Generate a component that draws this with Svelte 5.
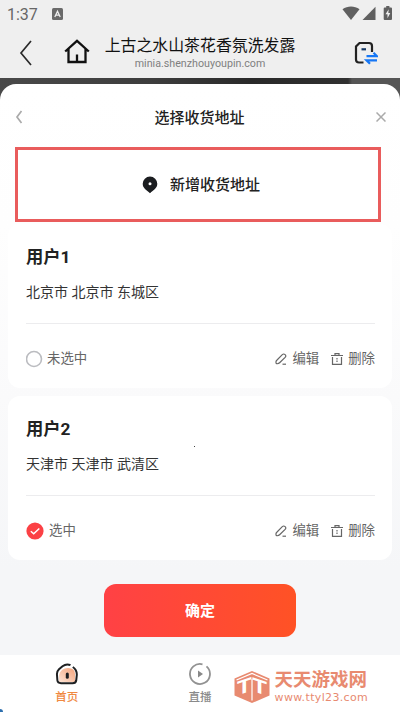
<script>
	let selected = 2

	const addresses = [
		{ id: 1, name: '用户1', area: '北京市 北京市 东城区' },
		{ id: 2, name: '用户2', area: '天津市 天津市 武清区' }
	]
</script>

<div class="phone">
	<div class="status">
		<span class="time">1:37</span>
		<svg class="a-box" width="11" height="12" viewBox="0 0 11 12">
			<rect width="11" height="12" rx="1.5" fill="#6a6a6a" />
			<path d="M2.8 9 5.5 3.2 8.2 9M4 7.2h3" fill="none" stroke="#efefef" stroke-width="1.3" />
		</svg>
		<svg class="signals" width="52" height="15" viewBox="0 0 52 15" fill="#606060">
			<path d="M.5 3.3C5.5-.5 12.500-.5 17.500 3.300L9 14z" />
			<path d="M33.500.8V14H20.500z" />
			<path d="M44.200 1.500V0h3.200v1.500H49q1 0 1 1V13q0 1-1 1h-6.300q-1 0-1-1V2.500q0-1 1-1z" />
			<path d="M46.700 3.300 43.500 8.300h2v4L48.300 7h-2z" fill="#efefef" />
		</svg>
	</div>

	<header>
		<svg class="back" width="14" height="26" viewBox="0 0 14 26">
			<path d="M12 1 2 13l10 12" fill="none" stroke="#2a2a2a" stroke-width="1.700" />
		</svg>
		<svg class="home" width="26" height="25" viewBox="0 0 26 25" fill="none" stroke="#111" stroke-width="2.300">
			<path d="M1.200 12.500 13 1.800l11.800 10.700M4.500 10v13h17V10M13 15.500V23" />
		</svg>
		<div class="page-name">
			<div class="title">上古之水山茶花香氛洗发露</div>
			<div class="url">minia.shenzhouyoupin.com</div>
		</div>
		<svg class="switch" width="24" height="24" viewBox="0 0 24 24" fill="none">
			<path d="M9.500 21.500H5q-3 0-3-3V5.500L5.500 2H15q3 0 3 3v6" stroke="#222" stroke-width="2.200" />
			<path d="M7.500 8.300h4.500" stroke="#173a66" stroke-width="2.200" />
			<path d="M12.500 15.200H23l-3.500-3.400M23 19.300H12.500l3.500 3.400" stroke="#1677f5" stroke-width="2.200" />
		</svg>
	</header>

	<div class="behind">
		<div class="sheet">
			<div class="sheet-head">
				<svg width="8" height="14" viewBox="0 0 8 14" fill="none" stroke="#aaa" stroke-width="1.700">
					<path d="M6.500 1 2 7l4.500 6" />
				</svg>
				<b>选择收货地址</b>
				<svg width="10" height="10" viewBox="0 0 10 10" fill="none" stroke="#aaa" stroke-width="1.500">
					<path d="m.5.5 9 9m0-9-9 9" />
				</svg>
			</div>

			<button class="add">
				<svg width="16" height="18" viewBox="0 0 16 18">
					<path d="M8 .5a7.300 7.300 0 0 0-7.300 7.300c0 4.500 3.800 6 7.300 9.500 3.500-3.500 7.300-5 7.300-9.500A7.300 7.300 0 0 0 8 .5z" fill="#1b1d20" />
					<circle cx="8" cy="7.700" r="1.500" fill="#fff" />
				</svg>
				<span>新增收货地址</span>
			</button>

			{#each addresses as item}
				<section class="card">
					<h2>{item.name}</h2>
					<p>{item.area}</p>
					<div class="actions">
						<button class="choose" on:click={() => (selected = item.id)}>
							{#if selected === item.id}
								<svg width="18" height="18" viewBox="0 0 18 18">
									<circle cx="9" cy="9" r="8.600" fill="#fb4145" />
									<path d="m4.800 9.200 2.900 2.600 5.600-5.300" fill="none" stroke="#fff" stroke-width="1.500" />
								</svg>
								<span class="on">选中</span>
							{:else}
								<svg width="18" height="18" viewBox="0 0 18 18">
									<circle cx="8" cy="9" r="7.500" fill="#fff" stroke="#bbbcc0" stroke-width="1.600" />
								</svg>
								<span>未选中</span>
							{/if}
						</button>
						<button class="edit">
							<svg width="12" height="12" viewBox="0 0 12 12" fill="none" stroke="#666" stroke-width="1.200">
								<path d="M1 9.500Q.7 8.200 1.800 7.200L7.300 1.600q1.400-1.200 2.800 0t0 2.800L4.600 9.800Q3.400 11 1.600 10.700 1 10.500 1 9.500z" />
								<path d="M7.500 11.200h3.500" />
							</svg>
							<span>编辑</span>
						</button>
						<button class="delete">
							<svg width="12" height="12" viewBox="0 0 12 12" fill="none" stroke="#666" stroke-width="1.200">
								<path d="M0 2.500h12M4 2V.700h4V2M1.500 4v7.300h9V4" />
								<path d="M6 5v4" stroke-dasharray="1.500 1" />
							</svg>
							<span>删除</span>
						</button>
					</div>
				</section>
			{/each}

			<button class="confirm">确定</button>
		</div>
	</div>

	<nav>
		<div class="tab active">
			<svg width="24" height="22" viewBox="0 0 24 22" fill="none">
				<defs>
					<linearGradient id="peach" x1="0" y1="1" x2="1" y2="0">
						<stop offset="0" stop-color="#fde4d5" />
						<stop offset="1" stop-color="#f5a37b" />
					</linearGradient>
				</defs>
				<path d="M4 19V12q2-7 9-7 7 0 7 6v8z" fill="url(#peach)" />
				<path d="M15.500 2.200Q11.500.2 7.500 3.200L4 6.200Q1.600 8.500 2 12l.4 5.500Q2.700 20.200 6 20.200h11.500q3.300 0 3.700-2.700l.6-5.500q.3-5-4-8" stroke="#1e2022" stroke-width="2" />
				<path d="M12.300 11v3.200" stroke="#1e2022" stroke-width="3" stroke-linecap="round" />
			</svg>
			<span>首页</span>
		</div>
		<div class="tab">
			<svg width="24" height="22" viewBox="0 0 24 22" fill="none">
				<path d="M14.500 1.300A10 10 0 1 0 18.500 3.400" stroke="#929292" stroke-width="1.800" />
				<path d="m10 7.600 5 3.400-5 3.400z" fill="#888" />
			</svg>
			<span>直播</span>
		</div>
		<div class="brand">
			<svg width="36" height="32" viewBox="0 0 36 32">
				<path d="M18 0 35.500 7.500v17L18 32 .5 24.500v-17z" fill="#e88a70" />
				<path d="M2.500 9 18 2.500 33.500 9M18 8v21.500" fill="none" stroke="#fff" stroke-width="1.200" />
				<text transform="matrix(1.200 -.400 0 1 3 24.500)">T</text>
				<text transform="matrix(1.200 .400 0 1 18.200 20)">T</text>
			</svg>
			<div>
				<div class="brand-name">天天游戏网</div>
				<div class="brand-url">www.ttyl23.com</div>
			</div>
		</div>
	</nav>

	<i class="speck"></i>
	<i class="corner"></i>
</div>

<style>
	:global(body) {
		margin: 0;
		background: #fff;
	}

	.phone {
		position: relative;
		width: 400px;
		height: 712px;
		overflow: hidden;
		display: flex;
		flex-direction: column;
		background: #efefef;
		font-family: Roboto, "Noto Sans CJK SC", sans-serif;
		color: #222;
	}

	svg {
		display: block;
		flex: none;
	}

	button {
		border: 0;
		padding: 0;
		background: none;
		font: inherit;
		color: inherit;
	}

	.status {
		height: 28px;
		box-sizing: border-box;
		padding: 0 6px 0 7px;
		display: flex;
		align-items: center;
	}

	.time {
		width: 45px;
		font-size: 16px;
		color: #666;
	}

	.signals {
		margin: -2px 0 0 auto;
	}

	header {
		height: 50px;
		display: flex;
		align-items: center;
	}

	.back {
		margin-left: 19px;
		margin-top: -1px;
	}

	.home {
		margin-left: 31px;
		margin-top: -3px;
	}

	.page-name {
		width: 192px;
		margin: -1px 0 0 14px;
		text-align: center;
		white-space: nowrap;
	}

	.title {
		font-size: 15.9px;
		line-height: 22px;
		color: #111;
	}

	.url {
		font-size: 10.7px;
		line-height: 14px;
		color: #808080;
	}

	.switch {
		margin-left: 58px;
		margin-top: -1px;
	}

	.behind {
		flex: 1;
		padding-top: 6px;
		background: linear-gradient(90deg, #494949, #3d3d3d 38%, #292929 63%, #303030 87%, #555 88%);
		background-size: 100% 30px;
		background-repeat: no-repeat;
	}

	.sheet {
		height: 571px;
		border-radius: 16px 16px 0 0;
		background: linear-gradient(#fff 0, #fefefe 25%, #fafafb 55%, #f5f6f8 85%);
		overflow: hidden;
	}

	.sheet-head {
		height: 63px;
		padding: 3px 14px 0 15px;
		display: flex;
		align-items: center;
		justify-content: space-between;
		box-sizing: border-box;
	}

	.sheet-head b {
		margin-top: -2px;
		font-size: 15px;
		font-weight: 500;
	}

	.add {
		width: 366px;
		height: 75px;
		margin-left: 15px;
		padding-left: 6px;
		display: flex;
		align-items: center;
		justify-content: center;
		gap: 12px;
		border: 3px solid #e95c5c;
		background: #fff;
		font-size: 15px;
		font-weight: 500;
	}

	.add span {
		margin-top: -3px;
	}

	.card {
		height: 164px;
		margin: 2px 8px 8px;
		padding: 21px 17px 0 18px;
		box-sizing: border-box;
		border-radius: 12px;
		background: #fff;
	}

	.card + .card {
		margin-top: 0;
	}

	h2 {
		margin: 0;
		font-size: 17.3px;
		line-height: 25px;
		font-weight: 700;
	}

	p {
		margin: 12px 0 0;
		font-size: 14px;
		line-height: 20px;
		color: #333;
	}

	.actions {
		margin-top: 21px;
		padding-top: 24px;
		display: flex;
		align-items: center;
		border-top: 1px solid #ececee;
		font-size: 13.4px;
		line-height: 22px;
		color: #666;
	}

	.actions button {
		display: flex;
		align-items: center;
		gap: 5px;
	}

	.actions .choose {
		gap: 3px;
		margin-right: auto;
	}

	.on {
		margin-left: 2px;
	}

	.actions .delete {
		margin-left: 12px;
	}

	.confirm {
		display: block;
		width: 192px;
		height: 53px;
		margin: 24px auto 0;
		padding-bottom: 3px;
		border-radius: 12px;
		background: linear-gradient(90deg, #ff4145, #ff5225);
		color: #fff;
		font-size: 15px;
		font-weight: 700;
	}

	nav {
		height: 57px;
		display: flex;
		background: #fff;
	}

	.tab {
		width: 133.3px;
		display: flex;
		flex-direction: column;
		align-items: center;
		padding-top: 8px;
		font-size: 11.5px;
		line-height: 17px;
		color: #8a8a8a;
		font-weight: 500;
	}

	.tab span {
		margin-top: 4px;
	}

	.active {
		color: #f0883f;
	}

	.brand {
		display: flex;
		margin: 16px 0 0 -33px;
		color: #e88a70;
	}

	.brand > div {
		margin-left: 5px;
	}

	.brand svg text {
		font-family: "Liberation Sans", sans-serif;
		font-weight: 700;
		font-size: 20px;
		fill: #fff;
	}

	.brand-name {
		height: 19px;
		font-size: 18.5px;
		line-height: 19px;
		font-weight: 700;
		white-space: nowrap;
	}

	.brand-url {
		margin-top: 1px;
		font-family: "DejaVu Sans", sans-serif;
		font-size: 11px;
		line-height: 13px;
		letter-spacing: .35px;
	}

	/* stray dots lying over the page */
	.speck {
		position: absolute;
		left: 194px;
		top: 446px;
		width: 1px;
		height: 1px;
		background: #444;
	}

	.corner {
		position: absolute;
		left: -3px;
		bottom: -3px;
		width: 6px;
		height: 6px;
		border-radius: 50%;
		background: #2d6fae;
	}
</style>
